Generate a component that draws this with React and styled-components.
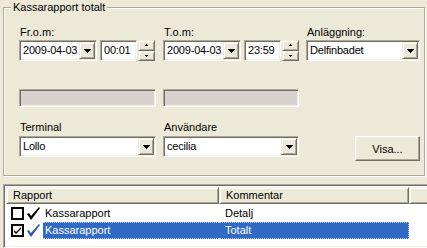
import React from 'react';
import styled, { createGlobalStyle, css } from 'styled-components';

const Global = createGlobalStyle`
  html, body { margin: 0; padding: 0; }
  body {
    width: 427px; height: 248px; overflow: hidden;
    background: #ECE9D8;
    font-family: "Liberation Sans", Arial, sans-serif;
    font-size: 11px; color: #000;
  }
`;

const sunken = css`
  border: 1px solid;
  border-color: #ACA899 #FFFFFF #FFFFFF #ACA899;
  box-shadow: inset 1px 1px 0 #716F64, inset -1px -1px 0 #F1EFE2;
`;

const raised = css`
  border: 1px solid;
  border-color: #F1EFE2 #716F64 #716F64 #F1EFE2;
  box-shadow: inset 1px 1px 0 #FFFFFF, inset -1px -1px 0 #ACA899;
  background: #ECE9D8;
`;

const Page = styled.div`
  width: 427px; height: 248px; overflow: hidden;
  display: flex; flex-direction: column;
`;

const Group = styled.div`
  position: relative;
  box-sizing: border-box;
  margin: 7px 2px 0 3px;
  height: 169px;
  border: 1px solid #ACA899;
  box-shadow: inset 1px 1px 0 #FFFFFF, 1px 1px 0 #FFFFFF;
  padding: 18px 0 0 15px;
`;

const GroupTitle = styled.span`
  position: absolute;
  top: -8px; left: 7px;
  padding: 0 2px;
  background: #ECE9D8;
  line-height: 14px;
`;

const Row = styled.div`
  display: grid;
  grid-template-columns: 137px 136px 114px;
  column-gap: 7px;
  margin-top: ${p => p.$top || 0}px;
`;

const Field = styled.div`
  display: flex; flex-direction: column;
  gap: ${p => p.$gap ?? 1}px;
`;

const Label = styled.div`
  line-height: 13px; height: 13px;
  padding-left: 1px;
  white-space: nowrap;
`;

const Controls = styled.div`
  display: flex; align-items: stretch;
  height: 21px;
`;

const Box = styled.div`
  ${sunken};
  box-sizing: border-box;
  height: ${p => p.$h || 21}px;
  width: ${p => (p.$w ? `${p.$w}px` : 'auto')};
  flex: ${p => (p.$w ? '0 0 auto' : '1 1 auto')};
  background: ${p => (p.$disabled ? '#D6D3CE' : '#FFFFFF')};
  display: flex; align-items: center;
  padding: 2px 1px 2px 2px;
  margin-right: ${p => p.$mr || 0}px;
`;

const BoxText = styled.span`
  flex: 1;
  min-width: 0;
  padding-left: 1px;
  line-height: 13px;
  letter-spacing: -0.2px;
  white-space: nowrap;
  overflow: visible;
`;

const DropButton = styled.div`
  ${raised};
  box-sizing: border-box;
  width: 16px; height: 17px;
  flex: 0 0 auto;
  display: flex; align-items: center; justify-content: center;
`;

const Spinner = styled.div`
  display: flex; flex-direction: column;
  width: 17px; height: 21px;
`;

const SpinButton = styled.div`
  ${raised};
  box-sizing: border-box;
  flex: 1;
  display: flex; align-items: center; justify-content: center;
`;

const Arrow = ({ up, w = 7 }) => {
  const h = Math.ceil(w / 2);
  return (
    <svg width={w} height={h} viewBox={`0 0 ${w} ${h}`} style={{ display: 'block' }}>
      <polygon
        points={up ? `0,${h} ${w},${h} ${w / 2},0` : `0,0 ${w},0 ${w / 2},${h}`}
        fill="#000"
        shapeRendering="crispEdges"
      />
    </svg>
  );
};

const Button = styled.button`
  justify-self: end;
  align-self: start;
  margin-top: 15px;
  width: 65px; height: 25px;
  box-sizing: border-box;
  font: inherit; color: #000;
  border: 1px solid;
  border-color: #FFFFFF #716F64 #716F64 #FFFFFF;
  box-shadow: inset -1px -1px 0 #ACA899, inset 1px 1px 0 #F1EFE2;
  background: #ECE9D8;
  padding: 0;
`;

const List = styled.div`
  ${sunken};
  margin: 8px 0 0 3px;
  width: 440px;
  flex: 1;
  background: #FFFFFF;
  padding: 2px 0 0 2px;
`;

const Header = styled.div`
  display: grid;
  grid-template-columns: 213px 190px 1fr;
  height: 17px;
`;

const HeaderCell = styled.div`
  ${raised};
  box-sizing: border-box;
  line-height: 15px;
  padding-left: 6px;
  white-space: nowrap;
`;

const ListRow = styled.div`
  display: grid;
  grid-template-columns: 213px 190px 1fr;
  height: 17px;
  margin-top: ${p => (p.$first ? 1 : 0)}px;
`;

const FirstCell = styled.div`
  display: flex; align-items: center;
  padding-left: 5px;
`;

const CheckBox = styled.div`
  box-sizing: border-box;
  width: 13px; height: 13px;
  border: 2px solid #000;
  background: #fff;
  display: flex; align-items: center; justify-content: center;
  margin-right: 2px;
`;

const Text = styled.div`
  flex: 1;
  height: 17px;
  box-sizing: border-box;
  padding-left: ${p => p.$pl ?? 2}px;
  white-space: nowrap;
  background: ${p => (p.$sel ? '#316AC5' : 'transparent')};
  color: ${p => (p.$sel ? '#FFFFFF' : '#000')};
  border-top: 1px dotted ${p => (p.$sel ? '#B8CCEC' : 'transparent')};
  border-bottom: 1px dotted ${p => (p.$sel ? '#B8CCEC' : 'transparent')};
  line-height: 15px;
`;

const CellText = styled(Text)`
  padding-left: 6px;
  border-right: 1px dotted ${p => (p.$sel ? '#B8CCEC' : 'transparent')};
`;

const CheckIcon = ({ color }) => (
  <svg width="16" height="15" viewBox="0 0 16 15" style={{ display: 'block', marginRight: 1 }}>
    <path d="M1 8 L3 7 L5 10 L13 1 L14 2 L5 14 Z" fill={color} />
  </svg>
);

const Tick = () => (
  <svg width="9" height="9" viewBox="0 0 9 9" style={{ display: 'block' }}>
    <path d="M1 4 L3 6 L8 1 L8 3 L3 8 L1 6 Z" fill="#000" />
  </svg>
);

const DateTime = ({ date, time }) => (
  <Controls>
    <Box $w={78} $mr={3}>
      <BoxText>{date}</BoxText>
      <DropButton><Arrow w={7} /></DropButton>
    </Box>
    <Box $w={37} $mr={1}>
      <BoxText>{time}</BoxText>
    </Box>
    <Spinner>
      <SpinButton><Arrow up w={3} /></SpinButton>
      <SpinButton><Arrow w={3} /></SpinButton>
    </Spinner>
  </Controls>
);

const Combo = ({ value }) => (
  <Controls>
    <Box>
      <BoxText>{value}</BoxText>
      <DropButton><Arrow w={7} /></DropButton>
    </Box>
  </Controls>
);

const rows = [
  { name: 'Kassarapport', comment: 'Detalj', checked: false, sel: false },
  { name: 'Kassarapport', comment: 'Totalt', checked: true, sel: true },
];

export default function App() {
  return (
    <Page>
      <Global />
      <Group>
        <GroupTitle>Kassarapport totalt</GroupTitle>
        <Row>
          <Field>
            <Label>Fr.o.m:</Label>
            <DateTime date="2009-04-03" time="00:01" />
          </Field>
          <Field>
            <Label>T.o.m:</Label>
            <DateTime date="2009-04-03" time="23:59" />
          </Field>
          <Field>
            <Label>Anläggning:</Label>
            <Combo value="Delfinbadet" />
          </Field>
        </Row>
        <Row $top={28}>
          <Box $disabled $h={18} />
          <Box $disabled $h={18} />
        </Row>
        <Row $top={14}>
          <Field $gap={2}>
            <Label>Terminal</Label>
            <Combo value="Lollo" />
          </Field>
          <Field $gap={2}>
            <Label>Användare</Label>
            <Combo value="cecilia" />
          </Field>
          <Button>Visa...</Button>
        </Row>
      </Group>
      <List>
        <Header>
          <HeaderCell>Rapport</HeaderCell>
          <HeaderCell>Kommentar</HeaderCell>
          <HeaderCell />
        </Header>
        {rows.map((r, i) => (
          <ListRow key={i} $first={i === 0}>
            <FirstCell>
              <CheckBox>{r.checked && <Tick />}</CheckBox>
              <CheckIcon color={r.sel ? '#2A55B5' : '#000'} />
              <Text $sel={r.sel} $pl={2}>{r.name}</Text>
            </FirstCell>
            <CellText $sel={r.sel}>{r.comment}</CellText>
            <div />
          </ListRow>
        ))}
      </List>
    </Page>
  );
}
